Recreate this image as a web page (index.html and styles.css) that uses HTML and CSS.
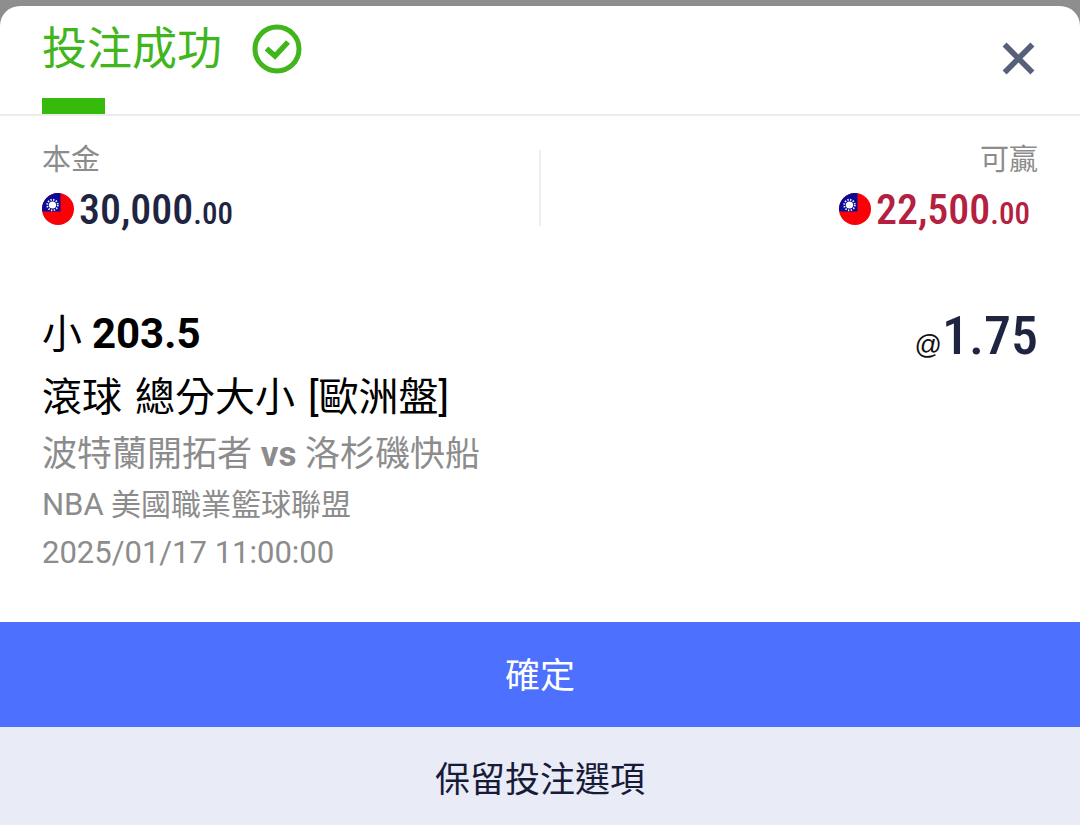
FILE: index.html
```html
<!DOCTYPE html>
<html lang="zh-Hant">
<head>
<meta charset="utf-8">
<meta name="viewport" content="width=device-width, initial-scale=1">
<title>投注成功</title>
<link rel="stylesheet" href="styles.css">
</head>
<body>
<svg class="sprite" aria-hidden="true">
  <symbol id="flag" viewBox="0 0 32 32">
    <clipPath id="disc"><circle cx="16" cy="16" r="16"/></clipPath>
    <g clip-path="url(#disc)">
      <path fill="#fb0007" d="M0 0h32v32H0z"/>
      <path fill="#0a0a96" d="M0 0h18.500v18.500H0z"/>
      <circle cx="10.500" cy="12" r="5.300" fill="none" stroke="#fff" stroke-width="1.800" stroke-dasharray="1.300 1.475"/>
      <circle cx="10.500" cy="12" r="3.600" fill="#fff"/>
    </g>
  </symbol>
</svg>
<main class="sheet">
  <header class="sheet-header">
    <div class="heading">
      <h1 class="title">投注成功</h1>
      <svg class="success-icon" viewBox="0 0 50 50" aria-hidden="true">
        <circle cx="25" cy="25" r="22" fill="none" stroke="#40b61c" stroke-width="5"/>
        <path d="M14.500 24.500 23 32 36 18" fill="none" stroke="#40b61c" stroke-width="5.500"/>
      </svg>
    </div>
    <button class="close" type="button" aria-label="關閉">
      <svg class="close-icon" viewBox="0 0 32 32" aria-hidden="true">
        <path d="M2.500 2.500 29.500 29.500M29.500 2.500 2.500 29.500" fill="none" stroke="#576079" stroke-width="5.500"/>
      </svg>
    </button>
  </header>
  <section class="amounts">
    <div class="amount">
      <span class="label">本金</span>
      <span class="money"><svg class="flag" aria-hidden="true"><use href="#flag"/></svg><span class="value">30,000<span class="cents">.00</span></span></span>
    </div>
    <div class="amount amount-win">
      <span class="label">可贏</span>
      <span class="money"><svg class="flag" aria-hidden="true"><use href="#flag"/></svg><span class="value">22,500<span class="cents">.00</span></span></span>
    </div>
  </section>
  <section class="bet">
    <div class="details">
      <h2 class="pick">小 <strong>203.5</strong></h2>
      <p class="market"><span>滾球</span> <span>總分大小</span> <span>[歐洲盤]</span></p>
      <p class="teams">波特蘭開拓者 <strong>vs</strong> 洛杉磯快船</p>
      <p class="league"><span class="league-code">NBA</span> 美國職業籃球聯盟</p>
      <p class="time">2025/01/17 11:00:00</p>
    </div>
    <p class="odds"><span class="at">@</span>1.75</p>
  </section>
  <footer class="actions">
    <button class="confirm" type="button">確定</button>
    <button class="keep" type="button">保留投注選項</button>
  </footer>
</main>
</body>
</html>
```
FILE: styles.css
```css
* { box-sizing: border-box; }
body {
  margin: 0;
  padding-top: 6px;
  min-height: 100vh;
  display: flex;
  background: #8e8e8e;
  color: #000;
  font-family: Roboto, "Noto Sans CJK TC", sans-serif;
}
h1, h2, p { margin: 0; font-weight: 400; }
button { border: 0; padding: 0; font-family: inherit; cursor: pointer; }
.sprite { position: absolute; width: 0; height: 0; }
.sheet {
  flex: 1;
  display: flex;
  flex-direction: column;
  overflow: hidden;
  border-radius: 20px 20px 0 0;
  background: #fff;
}
.sheet-header {
  display: flex;
  justify-content: space-between;
  align-items: flex-start;
  padding: 0 42px;
  border-bottom: 2px solid #ececee;
}
.heading {
  position: relative;
  display: flex;
  align-items: center;
  gap: 30px;
  padding: 12px 0 34px;
}
.heading::after {
  content: "";
  position: absolute;
  left: 0;
  bottom: 0;
  width: 63px;
  height: 16px;
  background: #36ba0b;
}
.title { padding-top: 2px; font-size: 45px; line-height: 60px; color: #40b61c; }
.success-icon { width: 50px; height: 50px; }
.close { display: flex; margin: 36px 3px 0 0; background: none; }
.close-icon { width: 33px; height: 33px; }
.amounts { position: relative; display: flex; justify-content: space-between; padding: 24px 42px 16px; }
.amounts::after {
  content: "";
  position: absolute;
  left: 50%;
  top: 34px;
  bottom: 24px;
  width: 2px;
  margin-left: -1px;
  background: #efefef;
}
.amount { display: flex; flex-direction: column; color: #1f2540; }
.amount-win { align-items: flex-end; color: #b42040; }
.amount-win .money { margin-right: 8px; }
.label { font-size: 29px; line-height: 40px; color: #8c8c8c; }
.money { display: flex; align-items: center; gap: 5px; margin-top: 4px; height: 50px; }
.flag { width: 32px; height: 32px; }
.value { padding-top: 5px; font-family: "Roboto Condensed", Roboto, sans-serif; font-size: 42px; font-weight: 500; line-height: 50px; }
.cents { font-size: 31px; }
.bet { display: flex; flex: 1; justify-content: space-between; padding: 54px 42px 40px; }
.pick { font-size: 40px; line-height: 60px; }
.pick strong { font-size: 42px; }
.market { display: flex; gap: 13px; font-size: 40px; line-height: 66px; }
.teams { font-size: 35px; line-height: 48px; color: #8c8c8c; }
.league { font-size: 30px; line-height: 52px; color: #8c8c8c; }
.league-code { font-size: 31px; }
.time { font-size: 31px; line-height: 44px; color: #8c8c8c; }
.odds { font-family: "Roboto Condensed", Roboto, sans-serif; font-size: 54px; font-weight: 500; line-height: 64px; color: #1f2540; }
.at { font-family: "Liberation Sans", sans-serif; font-size: 27px; font-weight: 400; color: #111; }
.actions { display: flex; flex-direction: column; }
.actions button { font-size: 35px; }
.confirm { height: 105px; padding-bottom: 4px; background: #4d70ff; color: #fff; }
.keep { height: 98px; background: #e9ecf6; color: #181b38; }
```
